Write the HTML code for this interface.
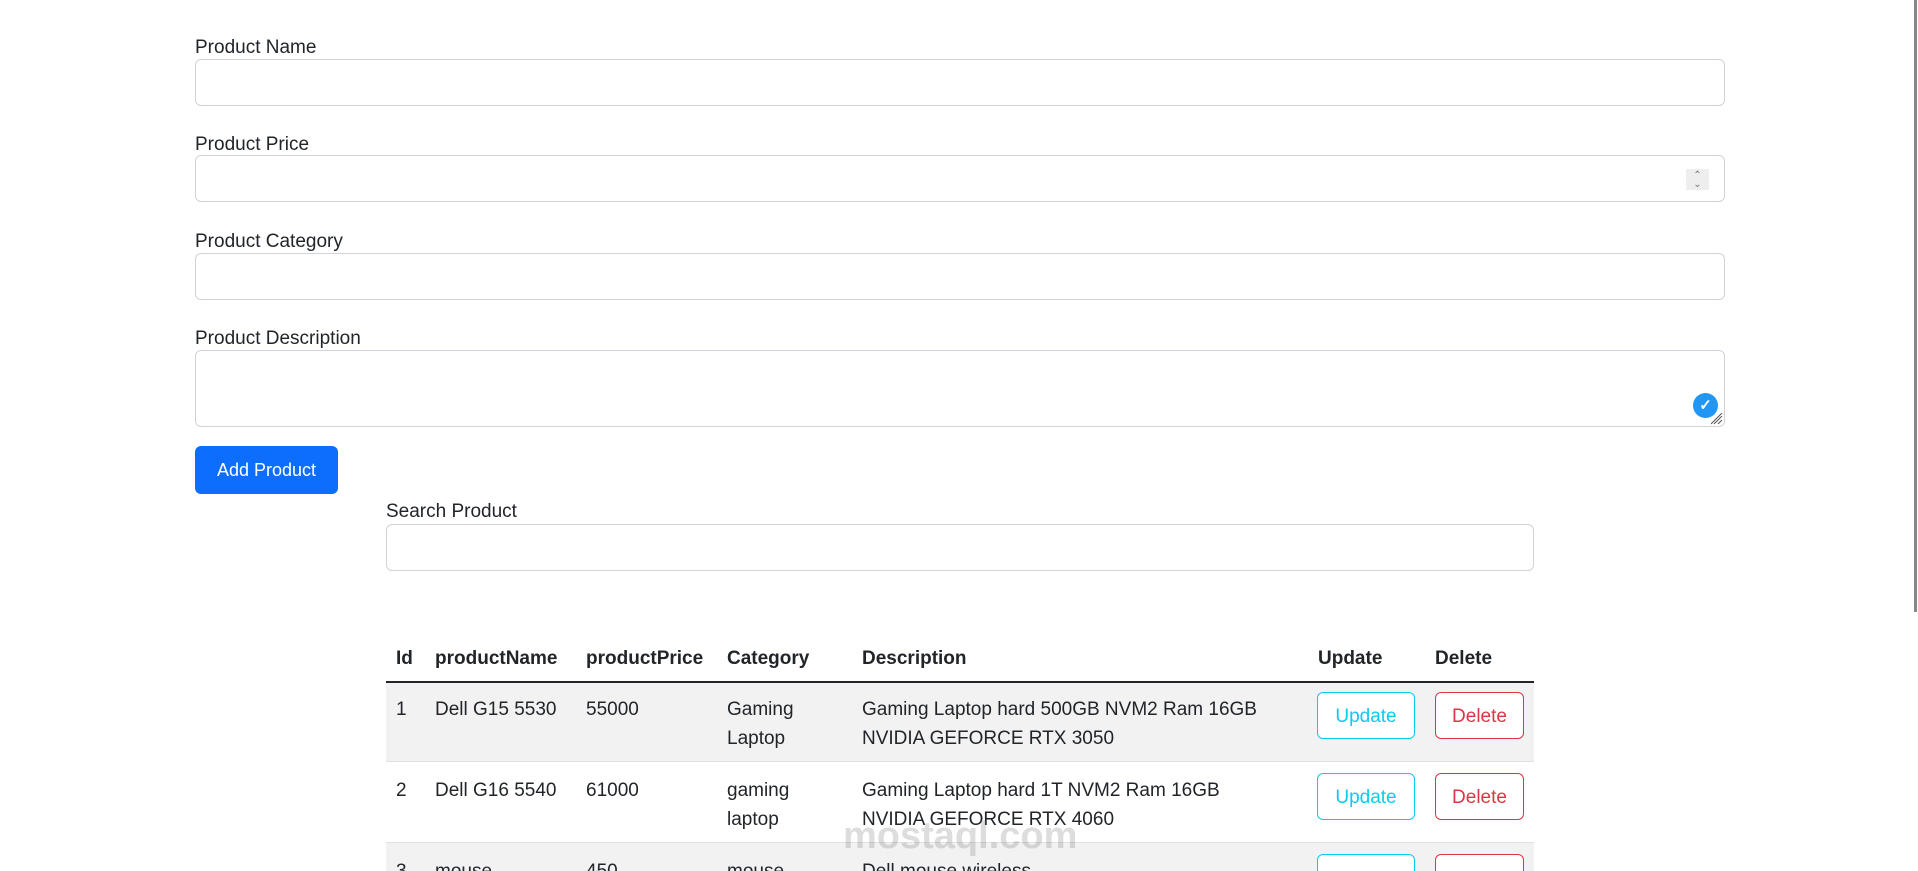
<!DOCTYPE html>
<html style="overflow:hidden;width:1918px;height:871px"><head><meta charset="utf-8"><style>
*{box-sizing:border-box;margin:0;padding:0}
body{width:1918px;height:871px;overflow:hidden;background:#fff;font-family:"Liberation Sans",sans-serif;color:#212529;font-size:19px;position:relative}
.a{position:absolute}
.lbl{position:absolute;left:195px;font-size:19px}
.inp{position:absolute;left:195px;width:1530px;border:1px solid #ced4da;border-radius:6px;background:#fff}
.btn{position:absolute;border-radius:6px;font-size:19px;text-align:center;background:#fff}
.t{position:absolute;font-size:19px;line-height:29px}
.b{font-weight:bold}
</style></head><body>
<div class="lbl" style="top:37px">Product Name</div>
<div class="inp" style="top:59px;height:47px"></div>
<div class="lbl" style="top:134px">Product Price</div>
<div class="inp" style="top:155px;height:47px">
  <div class="a" style="right:15px;top:13px;width:23px;height:21px;background:#eee;color:#777;font-size:10px;line-height:9px;text-align:center;padding-top:2px">⌃<br>⌄</div>
</div>
<div class="lbl" style="top:231px">Product Category</div>
<div class="inp" style="top:253px;height:47px"></div>
<div class="lbl" style="top:328px">Product Description</div>
<div class="inp" style="top:350px;height:77px">
  <div class="a" style="right:6px;bottom:8px;width:25px;height:25px;border-radius:50%;background:#2196f3;color:#fff;font-size:15px;line-height:25px;text-align:center;font-weight:bold">✓</div>
  <svg class="a" style="right:1px;bottom:1px" width="12" height="12"><path d="M11 3L3 11M11 7L7 11M11 11L11 11M11 0L0 11" stroke="#555" stroke-width="1"/></svg>
</div>
<div class="btn" style="left:195px;top:446px;width:143px;height:48px;background:#0d6efd;color:#fff;line-height:48px;font-size:18px">Add Product</div>
<div class="lbl" style="left:386px;top:501px">Search Product</div>
<div class="inp" style="left:386px;top:524px;width:1148px;height:47px"></div>

<div class="a" style="left:386px;top:681px;width:1148px;height:2px;background:#212529"></div>
<div class="a" style="left:386px;top:683px;width:1148px;height:79px;background:#f2f2f2;border-bottom:1px solid #dee2e6"></div>
<div class="a" style="left:386px;top:762px;width:1148px;height:81px;border-bottom:1px solid #dee2e6"></div>
<div class="a" style="left:386px;top:843px;width:1148px;height:28px;background:#f2f2f2"></div>

<div class="t b" style="left:396px;top:644px">Id</div>
<div class="t b" style="left:435px;top:644px">productName</div>
<div class="t b" style="left:586px;top:644px">productPrice</div>
<div class="t b" style="left:727px;top:644px">Category</div>
<div class="t b" style="left:862px;top:644px">Description</div>
<div class="t b" style="left:1318px;top:644px">Update</div>
<div class="t b" style="left:1435px;top:644px">Delete</div>

<div class="t" style="left:396px;top:695px">1</div>
<div class="t" style="left:435px;top:695px">Dell G15 5530</div>
<div class="t" style="left:586px;top:695px">55000</div>
<div class="t" style="left:727px;top:695px">Gaming<br>Laptop</div>
<div class="t" style="left:862px;top:695px">Gaming Laptop hard 500GB NVM2 Ram 16GB<br>NVIDIA GEFORCE RTX 3050</div>
<div class="btn" style="left:1317px;top:692px;width:98px;height:47px;border:1px solid #0dcaf0;color:#0dcaf0;line-height:47px">Update</div>
<div class="btn" style="left:1435px;top:692px;width:89px;height:47px;border:1px solid #dc3545;color:#dc3545;line-height:47px">Delete</div>

<div class="t" style="left:396px;top:776px">2</div>
<div class="t" style="left:435px;top:776px">Dell G16 5540</div>
<div class="t" style="left:586px;top:776px">61000</div>
<div class="t" style="left:727px;top:776px">gaming<br>laptop</div>
<div class="t" style="left:862px;top:776px">Gaming Laptop hard 1T NVM2 Ram 16GB<br>NVIDIA GEFORCE RTX 4060</div>
<div class="btn" style="left:1317px;top:773px;width:98px;height:47px;border:1px solid #0dcaf0;color:#0dcaf0;line-height:47px">Update</div>
<div class="btn" style="left:1435px;top:773px;width:89px;height:47px;border:1px solid #dc3545;color:#dc3545;line-height:47px">Delete</div>

<div class="t" style="left:396px;top:857px">3</div>
<div class="t" style="left:435px;top:857px">mouse</div>
<div class="t" style="left:586px;top:857px">450</div>
<div class="t" style="left:727px;top:857px">mouse</div>
<div class="t" style="left:862px;top:857px">Dell mouse wireless</div>
<div class="btn" style="left:1317px;top:854px;width:98px;height:47px;border:1px solid #0dcaf0"></div>
<div class="btn" style="left:1435px;top:854px;width:89px;height:47px;border:1px solid #dc3545"></div>

<div class="a" style="left:843px;top:815px;font-size:38px;color:rgba(120,120,120,0.25);font-weight:bold">mostaql.com</div>
<div class="a" style="left:1914px;top:0;width:3px;height:612px;background:#888"></div>
</body></html>
